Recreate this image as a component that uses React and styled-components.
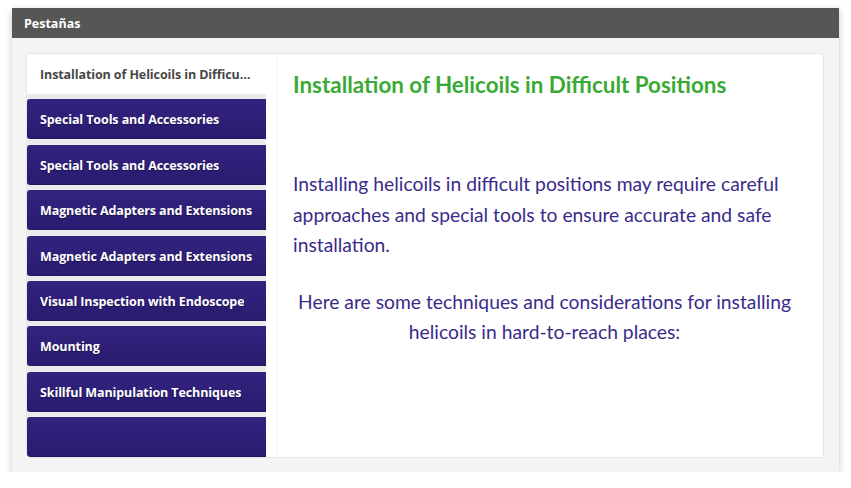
import React from "react";
import styled, { createGlobalStyle } from "styled-components";

const Global = createGlobalStyle`
  html, body { margin: 0; padding: 0; background: #ffffff; }
  * { box-sizing: border-box; }
`;

const Panel = styled.div`
  margin: 8px 12px 0 12px;
  width: 827px;
  height: 464px;
  display: flex;
  flex-direction: column;
  background: #f4f4f4;
  box-shadow: 0 2px 7px rgba(0, 0, 0, 0.22);
`;

const Header = styled.div`
  flex: none;
  height: 30px;
  background: #565656;
  color: #ffffff;
  font-family: "Open Sans", "Noto Sans", sans-serif;
  font-weight: 700;
  font-size: 12.5px;
  display: flex;
  align-items: center;
  padding-left: 12px;
`;

const Body = styled.div`
  flex: 1;
  min-height: 0;
  padding: 16px 16px 15px 15px;
  display: flex;
`;

const Card = styled.div`
  flex: 1;
  display: flex;
  background: #ffffff;
  box-shadow: 0 0 0 1px #e6e6e6;
  border-radius: 3px;
  overflow: hidden;
`;

const TabList = styled.div`
  width: 239px;
  flex: none;
  display: flex;
  flex-direction: column;
  gap: 5.375px;
  background: #ebebeb;
`;

const Tab = styled.div`
  height: 40px;
  flex: none;
  display: flex;
  align-items: center;
  padding: ${(p) => (p.$active ? "0 13px" : "2px 13px 0 13px")};
  border-radius: ${(p) => (p.$active ? "3px 0 0 0" : "3px 0 0 3px")};
  font-family: "Open Sans", "Noto Sans", sans-serif;
  font-weight: 700;
  font-size: 12.5px;
  letter-spacing: -0.1px;
  white-space: nowrap;
  overflow: hidden;
  color: ${(p) => (p.$active ? "#474747" : "#ffffff")};
  background: ${(p) =>
    p.$active ? "#ffffff" : "linear-gradient(#33237f, #2a1b70)"};
  text-shadow: ${(p) => (p.$active ? "none" : "0 1px 1px rgba(0,0,0,0.35)")};
  border-bottom: ${(p) => (p.$active ? "none" : "1px solid #24175f")};
`;

const TabLabel = styled.span`
  overflow: hidden;
  text-overflow: ellipsis;
`;

const Content = styled.div`
  flex: 1;
  margin-left: 10px;
  border-left: 1px solid #f2f2f2;
  padding: 16px 27px 0 16px;
  font-family: "Lato", "Noto Sans", sans-serif;
`;

const Title = styled.h2`
  margin: 0;
  font-size: 22.4px;
  line-height: 30px;
  font-weight: 700;
  color: #3aaa35;
`;

const Paragraph = styled.p`
  margin: ${(p) => (p.$first ? "69px 0 0 0" : "26px 0 0 0")};
  font-size: 19.3px;
  line-height: 30.5px;
  color: #3a2b8a;
  text-align: ${(p) => (p.$center ? "center" : "left")};
`;

const tabs = [
  "Installation of Helicoils in Difficult Positions",
  "Special Tools and Accessories",
  "Special Tools and Accessories",
  "Magnetic Adapters and Extensions",
  "Magnetic Adapters and Extensions",
  "Visual Inspection with Endoscope",
  "Mounting",
  "Skillful Manipulation Techniques",
  "",
];

export default function App() {
  return (
    <>
      <Global />
      <Panel>
        <Header>Pestañas</Header>
        <Body>
          <Card>
            <TabList>
              {tabs.map((t, i) => (
                <Tab key={i} $active={i === 0}>
                  <TabLabel>{t}</TabLabel>
                </Tab>
              ))}
            </TabList>
            <Content>
              <Title>Installation of Helicoils in Difficult Positions</Title>
              <Paragraph $first>
                Installing helicoils in difficult positions may require careful
                approaches and special tools to ensure accurate and safe
                installation.
              </Paragraph>
              <Paragraph $center>
                Here are some techniques and considerations for installing
                helicoils in hard-to-reach places:
              </Paragraph>
            </Content>
          </Card>
        </Body>
      </Panel>
    </>
  );
}
